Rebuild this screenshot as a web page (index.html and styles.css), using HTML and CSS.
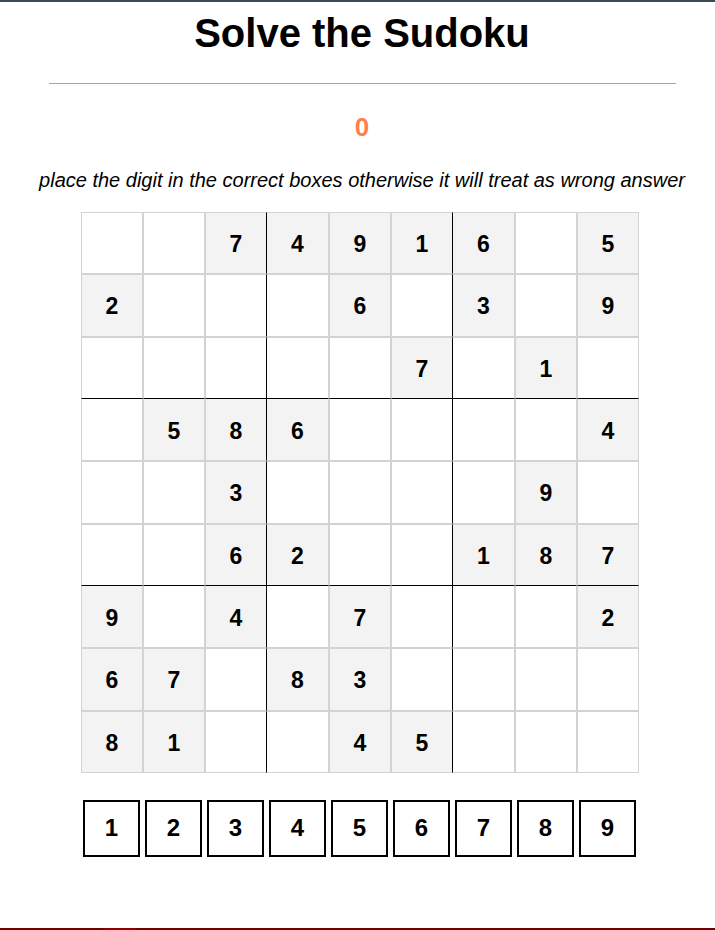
FILE: index.html
```html
<!DOCTYPE html>
<html lang="en">
<head>
<meta charset="utf-8">
<title>Sudoku</title>
<link rel="stylesheet" href="styles.css">
</head>
<body>
<main class="page">
  <h1 class="title">Solve the Sudoku</h1>
  <hr class="rule">
  <div class="score">0</div>
  <p class="hint">place the digit in the correct boxes otherwise it will treat as wrong answer</p>
  <div class="board">
    <div class="cell"></div><div class="cell"></div><div class="cell given br">7</div><div class="cell given nl">4</div><div class="cell given">9</div><div class="cell given br">1</div><div class="cell given nl">6</div><div class="cell"></div><div class="cell given">5</div>
    <div class="cell given">2</div><div class="cell"></div><div class="cell br"></div><div class="cell nl"></div><div class="cell given">6</div><div class="cell br"></div><div class="cell given nl">3</div><div class="cell"></div><div class="cell given">9</div>
    <div class="cell bb"></div><div class="cell bb"></div><div class="cell bb br"></div><div class="cell bb nl"></div><div class="cell bb"></div><div class="cell given bb br">7</div><div class="cell bb nl"></div><div class="cell given bb">1</div><div class="cell bb"></div>
    <div class="cell nt"></div><div class="cell given nt">5</div><div class="cell given nt br">8</div><div class="cell given nt nl">6</div><div class="cell nt"></div><div class="cell nt br"></div><div class="cell nt nl"></div><div class="cell nt"></div><div class="cell given nt">4</div>
    <div class="cell"></div><div class="cell"></div><div class="cell given br">3</div><div class="cell nl"></div><div class="cell"></div><div class="cell br"></div><div class="cell nl"></div><div class="cell given">9</div><div class="cell"></div>
    <div class="cell bb"></div><div class="cell bb"></div><div class="cell given bb br">6</div><div class="cell given bb nl">2</div><div class="cell bb"></div><div class="cell bb br"></div><div class="cell given bb nl">1</div><div class="cell given bb">8</div><div class="cell given bb">7</div>
    <div class="cell given nt">9</div><div class="cell nt"></div><div class="cell given nt br">4</div><div class="cell nt nl"></div><div class="cell given nt">7</div><div class="cell nt br"></div><div class="cell nt nl"></div><div class="cell nt"></div><div class="cell given nt">2</div>
    <div class="cell given">6</div><div class="cell given">7</div><div class="cell br"></div><div class="cell given nl">8</div><div class="cell given">3</div><div class="cell br"></div><div class="cell nl"></div><div class="cell"></div><div class="cell"></div>
    <div class="cell given">8</div><div class="cell given">1</div><div class="cell br"></div><div class="cell nl"></div><div class="cell given">4</div><div class="cell given br">5</div><div class="cell nl"></div><div class="cell"></div><div class="cell"></div>
  </div>
  <div class="digits">
    <div class="digit">1</div><div class="digit">2</div><div class="digit">3</div><div class="digit">4</div><div class="digit">5</div><div class="digit">6</div><div class="digit">7</div><div class="digit">8</div><div class="digit">9</div>
  </div>
  <div class="footer-bar"></div>
</main>
</body>
</html>
```

FILE: styles.css
```css
html, body {
  margin: 0;
  padding: 0;
  background: #ffffff;
}

body {
  font-family: "Liberation Sans", Arial, sans-serif;
  color: #000000;
}

.page {
  box-sizing: border-box;
  min-height: 100vh;
  display: flex;
  flex-direction: column;
  border-top: 2px solid #3a4b56;
  padding-left: 9px;
}

.title {
  margin: 8px 0 0;
  font-size: 40px;
  line-height: 46px;
  font-weight: bold;
  text-align: center;
}

.rule {
  box-sizing: border-box;
  width: 627px;
  height: 1px;
  margin: 27px 0 0 40px;
  border: 0;
  background: #a6a6a6;
}

.score {
  margin-top: 28px;
  font-size: 26px;
  line-height: 30px;
  font-weight: bold;
  color: #ff7f50;
  text-align: center;
}

.hint {
  margin: 27px 0 0;
  font-size: 20px;
  line-height: 23px;
  font-style: italic;
  text-align: center;
}

.board {
  display: grid;
  grid-template-columns: repeat(9, 62px);
  grid-template-rows: repeat(9, 62.333px);
  width: 558px;
  margin: 20px 0 0 72px;
}

.cell {
  box-sizing: border-box;
  display: flex;
  align-items: center;
  justify-content: center;
  padding-top: 3px;
  border: 1px solid #d3d3d3;
  font-size: 23px;
  font-weight: bold;
  background: #ffffff;
}

.cell.given {
  background: #f3f3f3;
}

.cell.br {
  border-right-color: #000000;
}

.cell.nl {
  border-left-width: 0;
}

.cell.bb {
  border-bottom-color: #000000;
}

.cell.nt {
  border-top-width: 0;
}

.digits {
  display: flex;
  gap: 5px;
  margin: 27px 0 0 74px;
}

.digit {
  box-sizing: border-box;
  width: 57px;
  height: 57px;
  display: flex;
  align-items: center;
  justify-content: center;
  border: 2px solid #000000;
  font-size: 24px;
  font-weight: bold;
}

.footer-bar {
  margin: auto 0 0 -9px;
  height: 2px;
  background: linear-gradient(to right, #6e0000 0, #6e0000 103px, #8e0000 103px, #8e0000 136px, #6e0000 136px);
}
```
